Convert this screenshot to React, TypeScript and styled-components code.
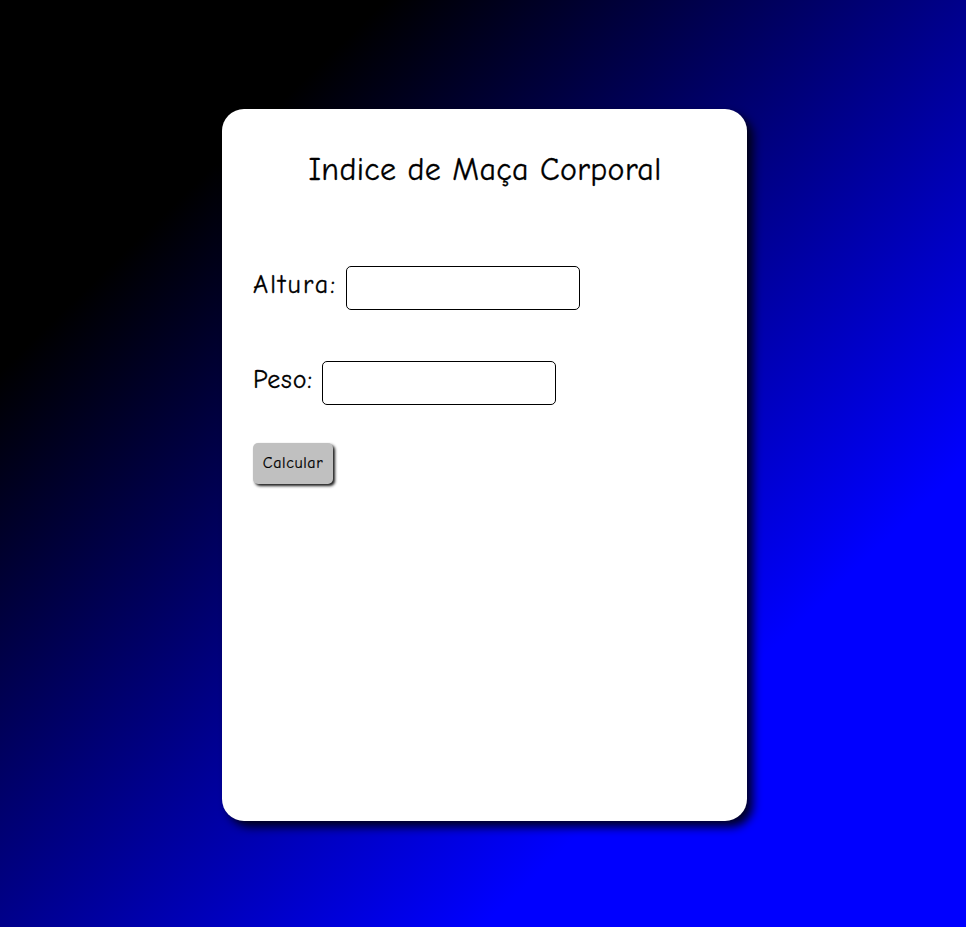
import React from "react";
import styled, { createGlobalStyle } from "styled-components";

const Global = createGlobalStyle`
  html, body { margin: 0; padding: 0; }
  body {
    min-height: 100vh;
    background: linear-gradient(to bottom right, #000 20%, #00f 75%);
    font-family: "Comic Sans MS", "Comic Neue", "Liberation Sans", sans-serif;
    color: #000;
  }
`;

const Page = styled.div`
  min-height: 100vh;
  display: flex;
  align-items: center;
  justify-content: center;
`;

const Card = styled.div`
  width: 525px;
  height: 712px;
  box-sizing: border-box;
  margin-left: 3px;
  margin-top: 2px;
  padding: 39px 30px 30px 31px;
  background: #fff;
  border-radius: 22px;
  box-shadow: 6px 6px 10px rgba(0, 0, 0, 0.85);
  display: flex;
  flex-direction: column;
`;

const Title = styled.h1`
  margin: 0;
  height: 44px;
  line-height: 44px;
  font-size: 32px;
  font-weight: normal;
  letter-spacing: 0.35px;
  text-align: center;
  -webkit-text-stroke: 0.3px #000;
`;

const Row = styled.div<{ $top: number }>`
  display: flex;
  align-items: center;
  gap: 9px;
  margin-top: ${(p) => p.$top}px;
`;

const Label = styled.label<{ $spacing: number }>`
  font-size: 26px;
  letter-spacing: ${(p) => p.$spacing}px;
  margin-bottom: 5px;
  -webkit-text-stroke: 0.3px #000;
`;

const Input = styled.input`
  width: 234px;
  height: 44px;
  box-sizing: border-box;
  border: 1px solid #000;
  border-radius: 5px;
  background: #fff;
  font: inherit;
  font-size: 18px;
  padding: 0 8px;
`;

const Button = styled.button`
  align-self: flex-start;
  margin-top: 38px;
  width: 80px;
  height: 41px;
  border: none;
  border-radius: 5px;
  background: #c0c0c0;
  box-shadow: 2px 2px 3px rgba(0, 0, 0, 0.9);
  font-family: inherit;
  font-size: 16px;
  letter-spacing: 0.6px;
  color: #000;
  cursor: pointer;
  -webkit-text-stroke: 0.2px #000;
`;

export default function App() {
  return (
    <>
      <Global />
      <Page>
        <Card>
          <Title>Indice de Maça Corporal</Title>
          <Row $top={74}>
            <Label htmlFor="altura" $spacing={2.1}>Altura:</Label>
            <Input id="altura" type="text" />
          </Row>
          <Row $top={51}>
            <Label htmlFor="peso" $spacing={0.8}>Peso:</Label>
            <Input id="peso" type="text" />
          </Row>
          <Button type="button">Calcular</Button>
        </Card>
      </Page>
    </>
  );
}
